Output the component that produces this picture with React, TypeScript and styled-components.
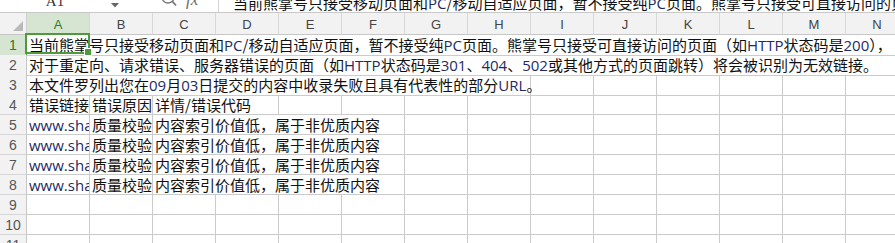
import React from "react";
import styled, { createGlobalStyle } from "styled-components";

const GlobalStyle = createGlobalStyle`
  html, body { margin: 0; padding: 0; background: #ffffff; overflow: hidden; }
  #root { width: 895px; height: 243px; overflow: hidden; }
`;

const COLS = ["A", "B", "C", "D", "E", "F", "G", "H", "I", "J", "K", "L", "M", "N"];
const GRID = "#cbcbcb";
const GREEN = "#4f9a3c";
const CELL_FONT = `"Noto Sans CJK SC", "Noto Sans", sans-serif`;

const Sheet = styled.div`
  width: 895px;
  display: flex;
  flex-direction: column;
  background: #fff;
`;

const FormulaStrip = styled.div`
  height: 12px;
  overflow: hidden;
  border-bottom: 1px solid #c9c9c9;
  background: #fff;
`;

const FormulaInner = styled.div`
  height: 26px;
  margin-top: -14px;
  display: flex;
`;

const NameBox = styled.div`
  width: 122px;
  display: flex;
  align-items: flex-start;
  box-sizing: border-box;
`;

const NameText = styled.div`
  flex: 1;
  text-align: center;
  padding-top: 6px;
  padding-left: 2px;
  line-height: 19px;
  font-family: "Liberation Serif", serif;
  font-size: 15px;
  color: #333;
`;

const NameArrow = styled.div`
  width: 14px;
  display: flex;
  justify-content: center;
  padding-top: 17px;
`;

const IconArea = styled.div`
  width: 96px;
  display: flex;
  align-items: flex-start;
  gap: 8px;
  padding-left: 38px;
  box-sizing: border-box;
`;

const Fx = styled.span`
  font-family: "Liberation Serif", serif;
  font-style: italic;
  font-size: 17px;
  line-height: 19px;
  padding-top: 4px;
  color: #6b6b6b;
`;

const FormulaInput = styled.div`
  flex: 1;
  border-left: 1px solid #d4d4d4;
  padding: 7px 0 0 14px;
  line-height: 19px;
  font-family: ${CELL_FONT};
  font-size: 15px;
  color: #111;
  white-space: nowrap;
  overflow: hidden;
`;

const GridRow = styled.div<{ $h: number }>`
  display: grid;
  grid-template-columns: 27px repeat(14, 63px);
  height: ${(p) => p.$h}px;
`;

const Corner = styled.div`
  box-sizing: border-box;
  background: #f2f2f2;
  border-right: 1px solid #d0d0d0;
  border-bottom: 1px solid #c6c6c6;
  position: relative;
`;

const CornerTri = styled.div`
  position: absolute;
  right: 3px;
  bottom: 3px;
  width: 0;
  height: 0;
  border-left: 10px solid transparent;
  border-bottom: 10px solid #b9b9b9;
`;

const ColHead = styled.div<{ $active?: boolean }>`
  box-sizing: border-box;
  background: ${(p) => (p.$active ? "#d5e5d1" : "#f2f2f2")};
  border-right: 1px solid #d8d8d8;
  border-bottom: 1px solid ${(p) => (p.$active ? GREEN : "#c6c6c6")};
  display: flex;
  align-items: center;
  justify-content: center;
  font-family: "Liberation Sans", Arial, sans-serif;
  font-size: 13px;
  color: ${(p) => (p.$active ? "#2f7a22" : "#444")};
  padding-top: 1px;
`;

const RowHead = styled.div<{ $active?: boolean }>`
  box-sizing: border-box;
  background: ${(p) => (p.$active ? "#d5e5d1" : "#f2f2f2")};
  border-right: 1px solid ${(p) => (p.$active ? GREEN : "#c6c6c6")};
  border-bottom: 1px solid #d6d6d6;
  display: flex;
  align-items: center;
  justify-content: center;
  font-family: "Liberation Sans", Arial, sans-serif;
  font-size: 14px;
  color: ${(p) => (p.$active ? "#2f7a22" : "#555")};
`;

const Cell = styled.div<{ $span?: number; $clip?: boolean }>`
  grid-column: span ${(p) => p.$span ?? 1};
  box-sizing: border-box;
  border-right: 1px solid ${GRID};
  border-bottom: 1px solid ${GRID};
  padding: 0 0 0 2px;
  line-height: 19px;
  font-family: ${CELL_FONT};
  font-size: 15px;
  color: #111;
  white-space: nowrap;
  overflow: ${(p) => (p.$clip ? "hidden" : "visible")};
  position: relative;
  min-width: 0;
`;

const Latin = styled.span`
  font-family: "Open Sans", "Noto Sans", sans-serif;
  color: #1d2a66;
`;

const Selection = styled.div`
  position: absolute;
  left: -2px;
  top: -2px;
  width: 65px;
  height: 21px;
  border: 2px solid ${GREEN};
  box-sizing: border-box;
  pointer-events: none;
`;

const Handle = styled.div`
  position: absolute;
  right: -4px;
  bottom: -4px;
  width: 6px;
  height: 6px;
  background: ${GREEN};
  border: 1px solid #fff;
`;

function Rich({ text }: { text: string }) {
  const parts = text.split(/([A-Za-z0-9.]+)/);
  return (
    <>
      {parts.map((p, i) =>
        /^[A-Za-z0-9.]+$/.test(p) ? <Latin key={i}>{p}</Latin> : <React.Fragment key={i}>{p}</React.Fragment>
      )}
    </>
  );
}

type CellDef = { span?: number; text?: string; clip?: boolean; selected?: boolean };

const ROW1 = "当前熊掌号只接受移动页面和PC/移动自适应页面，暂不接受纯PC页面。熊掌号只接受可直接访问的页面（如HTTP状态码是200），";
const ROW2 = "对于重定向、请求错误、服务器错误的页面（如HTTP状态码是301、404、502或其他方式的页面跳转）将会被识别为无效链接。";
const ROW3 = "本文件罗列出您在09月03日提交的内容中收录失败且具有代表性的部分URL。";

const dataRow: CellDef[] = [
  { text: "www.shadiao.cn/article", clip: true },
  { text: "质量校验" },
  { text: "内容索引价值低，属于非优质内容", span: 4 },
];

const ROWS: CellDef[][] = [
  [{ text: ROW1, span: 14, selected: true }],
  [{ text: ROW2, span: 14 }],
  [{ text: ROW3, span: 8 }],
  [{ text: "错误链接", clip: true }, { text: "错误原因" }, { text: "详情/错误代码", span: 2 }],
  dataRow,
  dataRow,
  dataRow,
  dataRow,
  [],
  [],
  [],
];

function fill(cells: CellDef[]): CellDef[] {
  const used = cells.reduce((s, c) => s + (c.span ?? 1), 0);
  const rest: CellDef[] = [];
  for (let i = used; i < COLS.length; i++) rest.push({});
  return [...cells, ...rest];
}

function SearchIcon() {
  return (
    <svg width="18" height="20" viewBox="0 0 18 20" style={{ marginTop: 3 }}>
      <circle cx="8" cy="8" r="6" fill="none" stroke="#7a7a7a" strokeWidth="1.4" />
      <line x1="5.5" y1="8" x2="10.5" y2="8" stroke="#7a7a7a" strokeWidth="1.2" />
      <line x1="12.3" y1="12.3" x2="16" y2="16.5" stroke="#7a7a7a" strokeWidth="1.8" />
    </svg>
  );
}

function DropArrow() {
  return (
    <svg width="8" height="5" viewBox="0 0 8 5">
      <path d="M0 0 L8 0 L4 4.5 Z" fill="#666" />
    </svg>
  );
}

export default function App() {
  return (
    <>
      <GlobalStyle />
      <Sheet>
        <FormulaStrip>
          <FormulaInner>
            <NameBox>
              <NameText>A1</NameText>
              <NameArrow>
                <DropArrow />
              </NameArrow>
            </NameBox>
            <IconArea>
              <SearchIcon />
              <Fx>fx</Fx>
            </IconArea>
            <FormulaInput>
              <Rich text={ROW1 + "如HTTP状态码是200），"} />
            </FormulaInput>
          </FormulaInner>
        </FormulaStrip>

        <GridRow $h={22}>
          <Corner>
            <CornerTri />
          </Corner>
          {COLS.map((c, i) => (
            <ColHead key={c} $active={i === 0}>
              {c}
            </ColHead>
          ))}
        </GridRow>

        {ROWS.map((cells, r) => (
          <GridRow key={r} $h={20}>
            <RowHead $active={r === 0}>{r + 1}</RowHead>
            {fill(cells).map((cell, i) => (
              <Cell key={i} $span={cell.span} $clip={cell.clip}>
                {cell.text ? <Rich text={cell.text} /> : null}
                {cell.selected ? (
                  <Selection>
                    <Handle />
                  </Selection>
                ) : null}
              </Cell>
            ))}
          </GridRow>
        ))}
      </Sheet>
    </>
  );
}
